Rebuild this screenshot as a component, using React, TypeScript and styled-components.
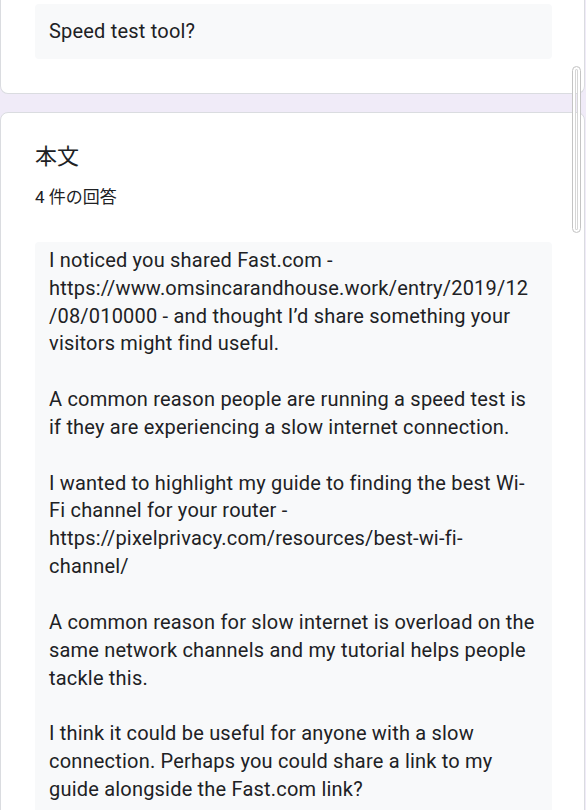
import React from 'react';
import styled, { createGlobalStyle } from 'styled-components';

const GlobalStyle = createGlobalStyle`
  html, body {
    margin: 0;
    padding: 0;
    background: #f0ebf8;
    overflow: hidden;
  }
  body {
    font-family: Roboto, "Noto Sans CJK JP", "Liberation Sans", sans-serif;
    color: #202124;
  }
`;

const Page = styled.div`
  width: 585px;
  display: flex;
  flex-direction: column;
  gap: 18px;
`;

const Card = styled.section<{ $cut?: boolean }>`
  background: #fff;
  border: 1px solid #dadce0;
  border-radius: ${({ $cut }) => ($cut ? '0 0 8px 8px' : '8px 8px 0 0')};
  border-top: ${({ $cut }) => ($cut ? 'none' : '1px solid #dadce0')};
  padding: ${({ $cut }) => ($cut ? '4px 0 34px 34px' : '30px 0 40px 34px')};
`;

const Title = styled.h2`
  margin: 0;
  font-size: 22px;
  font-weight: 400;
  line-height: 28px;
`;

const Count = styled.div`
  margin-top: 15px;
  font-size: 17px;
  line-height: 22px;
`;

const Answer = styled.div<{ $tall?: boolean }>`
  width: 517px;
  box-sizing: border-box;
  background: #f8f9fa;
  border-radius: 4px;
  padding: ${({ $tall }) => ($tall ? '5px 14px 14px 14px' : '14px 14px 13px 14px')};
  margin-top: ${({ $tall }) => ($tall ? '34px' : '0')};
  font-size: 20px;
  letter-spacing: 0.2px;
  line-height: 27.85px;
  white-space: pre-wrap;
  overflow-wrap: break-word;
`;

const Thumb = styled.div`
  position: fixed;
  left: 572px;
  top: 66px;
  width: 9px;
  height: 167px;
  box-sizing: border-box;
  border: 1px solid #c4c4c4;
  border-radius: 5px;
  box-shadow: inset 0 0 0 2px #fff, inset 0 0 0 3px #d6d6d6;
`;

const body = `I noticed you shared Fast.com - https://www.omsincarandhouse.work/entry/2019/12\u200B/08/010000 - and thought I’d share something your visitors might find useful.

A common reason people are running a speed test is if they are experiencing a slow internet connection.

I wanted to highlight my guide to finding the best Wi-Fi channel for your router - https://pixelprivacy.com/resources/best-wi-fi-channel/

A common reason for slow internet is overload on the same network channels and my tutorial helps people tackle this.

I think it could be useful for anyone with a slow connection. Perhaps you could share a link to my guide alongside the Fast.com link?`;

export default function App() {
  return (
    <>
      <GlobalStyle />
      <Page>
        <Card $cut>
          <Answer>Speed test tool?</Answer>
        </Card>
        <Card>
          <Title>本文</Title>
          <Count>4 件の回答</Count>
          <Answer $tall>{body}</Answer>
        </Card>
      </Page>
      <Thumb />
    </>
  );
}
